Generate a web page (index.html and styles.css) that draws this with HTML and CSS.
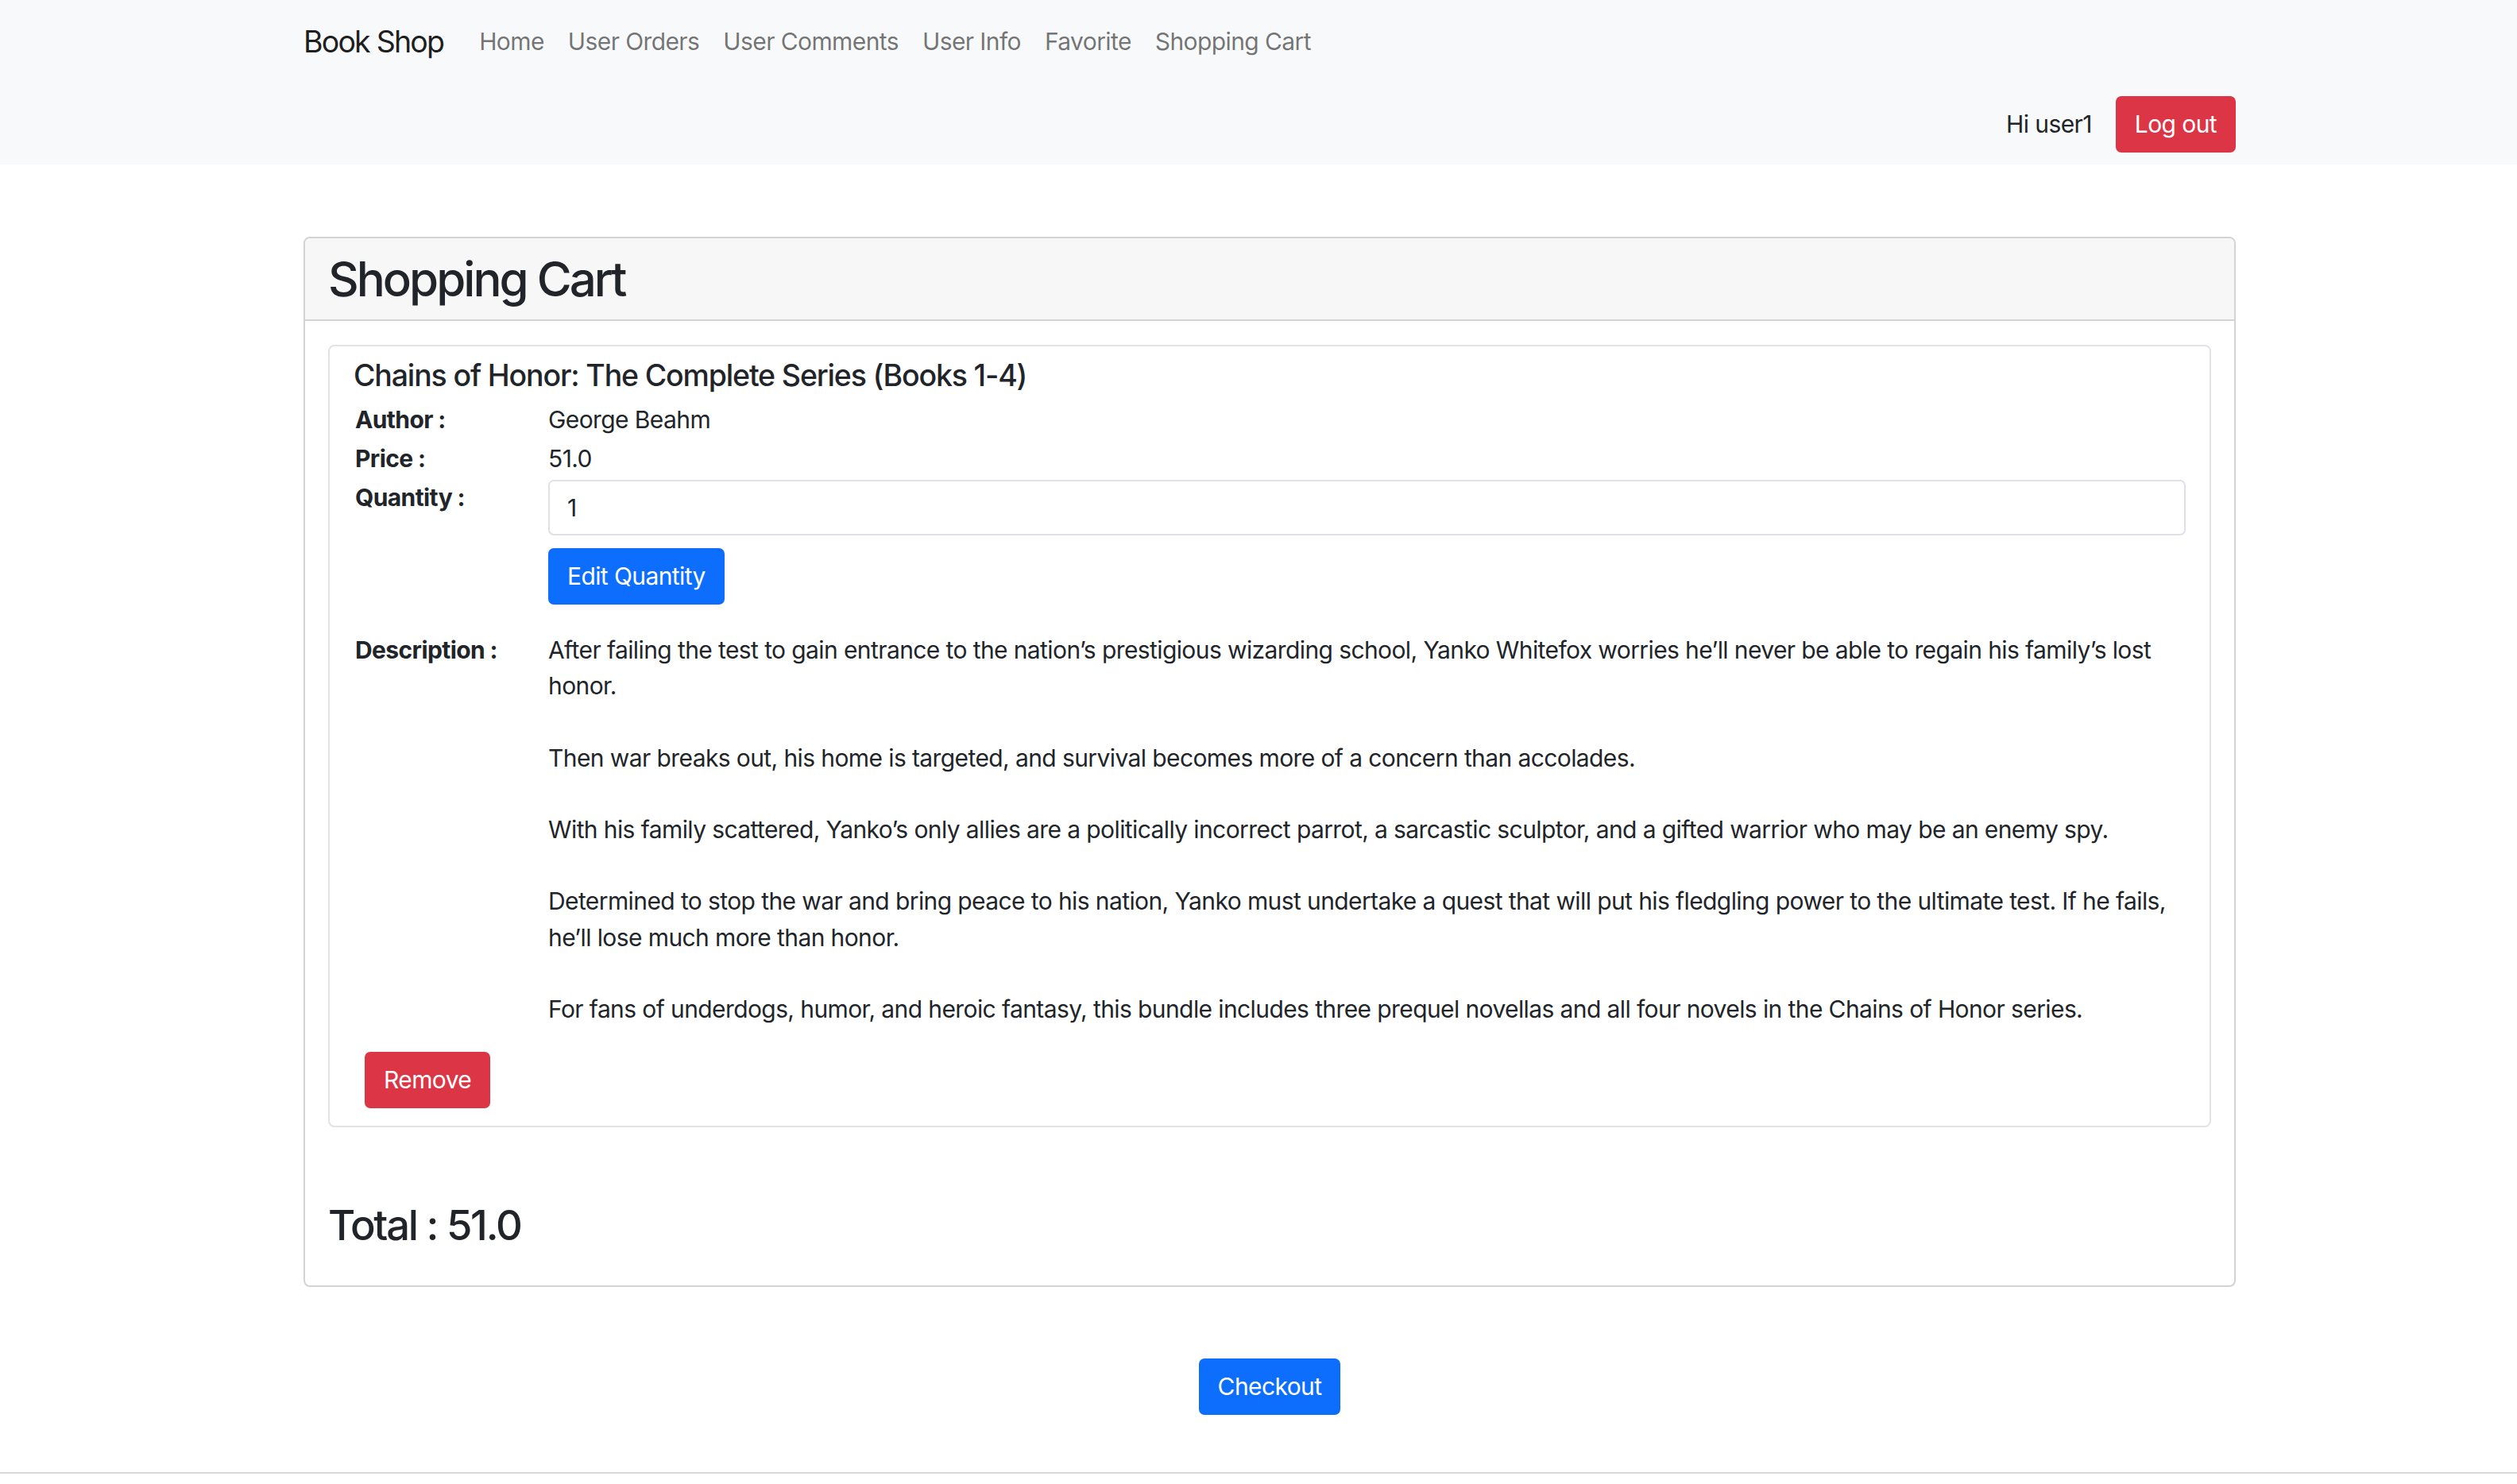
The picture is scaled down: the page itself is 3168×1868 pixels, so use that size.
FILE: index.html
```html
<!DOCTYPE html>
<html lang="en">
<head>
<meta charset="utf-8">
<title>Book Shop</title>
<link rel="stylesheet" href="styles.css">
</head>
<body>
<nav class="navbar">
  <div class="shell">
    <div class="container">
      <div class="nav-top">
        <a class="brand" href="#">Book Shop</a>
        <ul class="nav-links">
          <li><a href="#">Home</a></li>
          <li><a href="#">User Orders</a></li>
          <li><a href="#">User Comments</a></li>
          <li><a href="#">User Info</a></li>
          <li><a href="#">Favorite</a></li>
          <li><a href="#">Shopping Cart</a></li>
        </ul>
      </div>
      <div class="nav-user">
        <span class="greeting">Hi user1</span>
        <button class="btn btn-danger" type="button">Log out</button>
      </div>
    </div>
  </div>
</nav>

<main class="shell">
  <div class="container">
    <section class="card">
      <header class="card-header">
        <h2 class="card-title">Shopping Cart</h2>
      </header>
      <div class="card-body">
        <article class="item">
          <h5 class="item-title">Chains of Honor: The Complete Series (Books 1-4)</h5>
          <div class="details">
            <div class="label">Author :</div>
            <div class="value">George Beahm</div>

            <div class="label">Price :</div>
            <div class="value">51.0</div>

            <div class="label">Quantity :</div>
            <div class="value qty">
              <input class="form-control" type="text" value="1">
              <button class="btn btn-primary edit" type="button">Edit Quantity</button>
            </div>

            <div class="label">Description :</div>
            <div class="value desc">After failing the test to gain entrance to the nation’s prestigious wizarding school, Yanko Whitefox worries he’ll never be able to regain his family’s lost honor.<br><br>Then war breaks out, his home is targeted, and survival becomes more of a concern than accolades.<br><br>With his family scattered, Yanko’s only allies are a politically incorrect parrot, a sarcastic sculptor, and a gifted warrior who may be an enemy spy.<br><br>Determined to stop the war and bring peace to his nation, Yanko must undertake a quest that will put his fledgling power to the ultimate test. If he fails, he’ll lose much more than honor.<br><br>For fans of underdogs, humor, and heroic fantasy, this bundle includes three prequel novellas and all four novels in the Chains of Honor series.</div>
          </div>
          <button class="btn btn-danger remove" type="button">Remove</button>
        </article>
        <h3 class="total">Total : 51.0</h3>
      </div>
    </section>
    <div class="checkout-row">
      <button class="btn btn-primary" type="button">Checkout</button>
    </div>
  </div>
</main>
<hr class="footer-rule">
</body>
</html>
```

FILE: styles.css
```css
* { box-sizing: border-box; }

html, body {
  margin: 0;
  padding: 0;
  background: #fff;
}

body {
  font-family: Inter, "Liberation Sans", Arial, sans-serif;
  font-size: 30px;
  line-height: 45px;
  letter-spacing: -0.02em;
  color: #212529;
}

.shell {
  padding-left: 28px;
}

.container {
  width: 2432px;
  margin: 0 auto;
}

/* Navbar */
.navbar {
  background: #f8f9fa;
  padding: 15px 0;
}

.nav-top {
  display: flex;
  align-items: center;
}

.brand {
  font-size: 37.5px;
  line-height: 56px;
  letter-spacing: -0.048em;
  padding: 9.5px 0;
  margin-right: 30px;
  color: rgba(0, 0, 0, 0.9);
  text-decoration: none;
}

.nav-links {
  display: flex;
  list-style: none;
  margin: 0;
  padding: 0;
}

.nav-links a {
  display: block;
  padding: 15px;
  color: rgba(0, 0, 0, 0.55);
  text-decoration: none;
}

.nav-user {
  display: flex;
  justify-content: flex-end;
  align-items: center;
  margin-top: 31px;
}

.greeting {
  margin-right: 30px;
}

/* Buttons */
.btn {
  display: inline-block;
  font-family: inherit;
  font-size: 30px;
  line-height: 45px;
  letter-spacing: inherit;
  padding: 11px 22px;
  border: 2px solid transparent;
  border-radius: 7px;
  color: #fff;
  cursor: pointer;
}

.btn-danger {
  background: #dc3545;
  border-color: #dc3545;
}

.btn-primary {
  background: #0d6efd;
  border-color: #0d6efd;
}

/* Cards */
.card {
  margin-top: 91px;
  border: 2px solid #d3d3d3;
  border-radius: 8px;
  background: #fff;
}

.card-header {
  background: #f7f7f7;
  border-bottom: 2px solid #d3d3d3;
  border-radius: 7px 7px 0 0;
  padding: 15px 29px;
}

.card-title {
  margin: 0;
  font-size: 60px;
  line-height: 72px;
  font-weight: 500;
  letter-spacing: -0.05em;
}

.card-body {
  padding: 30px 29px 31px;
}

.item {
  border: 2px solid #e1e3e6;
  border-radius: 8px;
  padding: 14px 30px 22px;
}

.item-title {
  margin: 0 0 11px;
  font-size: 37.5px;
  line-height: 45px;
  font-weight: 500;
  letter-spacing: -0.031em;
}

.details {
  display: grid;
  grid-template-columns: 245px 1fr;
  row-gap: 4px;
}

.label {
  font-weight: 700;
  padding-left: 2px;
}

.qty {
  margin-bottom: 31px;
}

.desc {
  line-height: 45.2px;
}

.form-control {
  display: block;
  width: 100%;
  height: 70px;
  font-family: inherit;
  font-size: 30px;
  line-height: 45px;
  letter-spacing: inherit;
  color: #212529;
  padding: 11px 22px;
  border: 2px solid #dee2e6;
  border-radius: 7px;
  background: #fff;
}

.edit {
  margin-top: 16px;
}

.remove {
  margin-top: 31px;
  margin-left: 14px;
}

.total {
  margin: 92px 0 13px;
  font-size: 52.5px;
  line-height: 63px;
  font-weight: 500;
  letter-spacing: -0.043em;
}

.checkout-row {
  display: flex;
  justify-content: center;
  margin-top: 90px;
}

.footer-rule {
  margin: 72px 0 0;
  border: 0;
  border-top: 2px solid #d9d9d9;
}
```
